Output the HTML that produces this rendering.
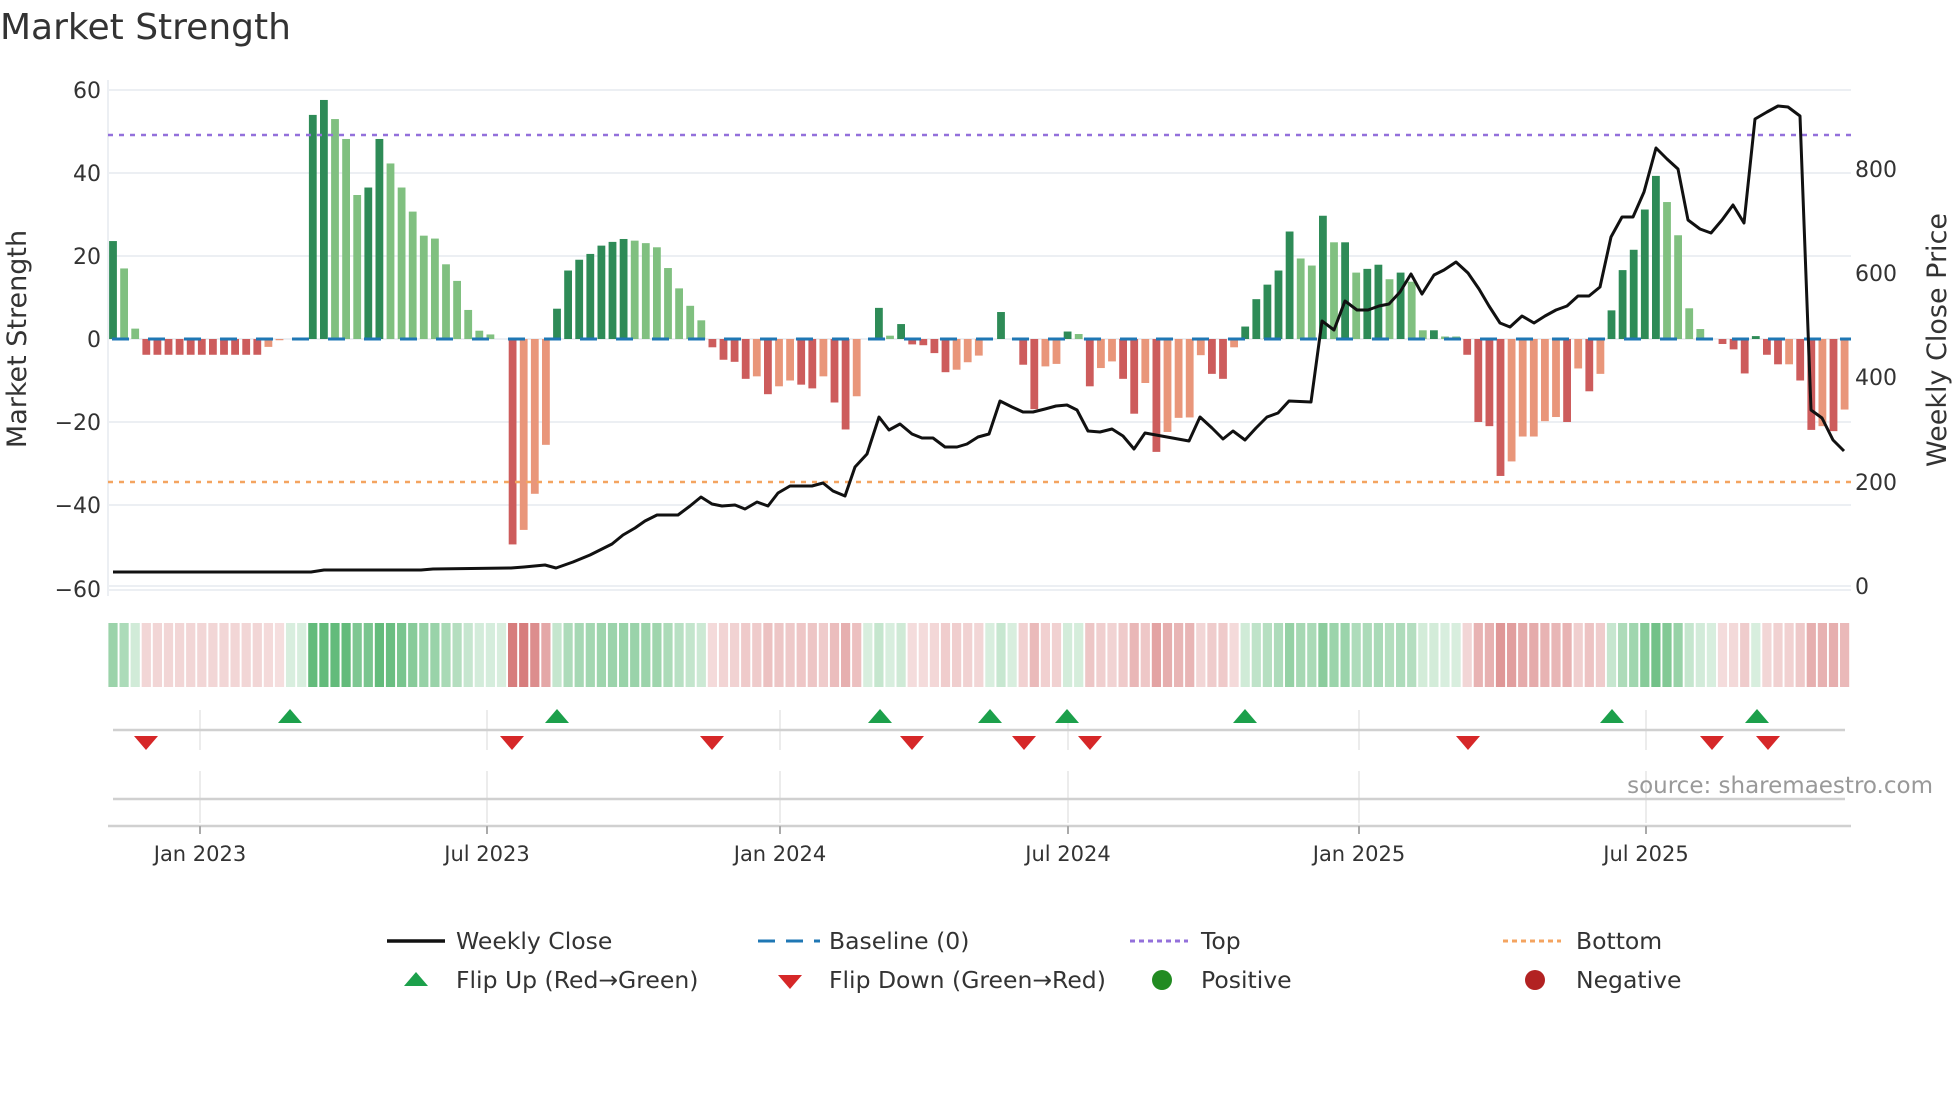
<!DOCTYPE html>
<html><head><meta charset="utf-8">
<style>
html,body{margin:0;padding:0;background:#fff;width:1960px;height:1102px;overflow:hidden}
svg{display:block}
text{font-family:"DejaVu Sans","Liberation Sans",sans-serif;fill:#333}
</style></head>
<body>
<svg id="s" width="1960" height="1102" viewBox="0 0 1960 1102" xmlns="http://www.w3.org/2000/svg">
<text x="0" y="39" font-size="36" fill="#333">Market Strength</text>
<g stroke="#eceff3" stroke-width="2">
<line x1="108" y1="90" x2="1851" y2="90"/>
<line x1="108" y1="173" x2="1851" y2="173"/>
<line x1="108" y1="256" x2="1851" y2="256"/>
<line x1="108" y1="339" x2="1851" y2="339"/>
<line x1="108" y1="422" x2="1851" y2="422"/>
<line x1="108" y1="505" x2="1851" y2="505"/>
<line x1="108" y1="586" x2="1851" y2="586"/>
<line x1="108" y1="590" x2="1851" y2="590"/>
<line x1="108" y1="80" x2="108" y2="596"/>
</g>
<g font-size="22" text-anchor="end">
<text x="101" y="98">60</text>
<text x="101" y="181">40</text>
<text x="101" y="264">20</text>
<text x="101" y="347">0</text>
<text x="101" y="430">−20</text>
<text x="101" y="513">−40</text>
<text x="101" y="597">−60</text>
</g>
<g font-size="22">
<text x="1855" y="177">800</text>
<text x="1855" y="281">600</text>
<text x="1855" y="385">400</text>
<text x="1855" y="490">200</text>
<text x="1855" y="594">0</text>
</g>
<text font-size="27" text-anchor="middle" transform="translate(26,339) rotate(-90)">Market Strength</text>
<text font-size="27" text-anchor="middle" transform="translate(1946,340) rotate(-90)">Weekly Close Price</text>
<g id="bars"></g>
<line x1="108" y1="339" x2="1851" y2="339" stroke="#1f77b4" stroke-width="3" stroke-dasharray="17 19" stroke-dashoffset="-4"/>
<line x1="108" y1="135" x2="1851" y2="135" stroke="#9370db" stroke-width="2.5" stroke-dasharray="5 6"/>
<line x1="108" y1="482" x2="1851" y2="482" stroke="#f4a460" stroke-width="2.5" stroke-dasharray="5 6"/>
<polyline fill="none" stroke="#111" stroke-width="3" stroke-linejoin="round" points="113,572 311,572 324,570 421,570 433,569 511,568 524,567 545,565 556,568 573,562 590,555 612,544 623,535 635,528 645,521 657,515 678,515 690,506 701,497 712,504 722,506 735,505 745,509 757,502 768,506 778,493 790,486 812,486 823,483 833,491 845,496 855,467 867,454 879,417 889,430 900,424 912,434 922,438 933,438 945,447 957,447 967,444 978,437 989,434 1000,401 1012,407 1023,412 1033,412 1045,409 1056,406 1067,405 1077,410 1088,431 1100,432 1112,429 1123,436 1134,449 1145,433 1189,441 1200,417 1212,428 1223,439 1233,431 1245,440 1256,428 1267,417 1278,413 1289,401 1311,402 1322,321 1334,330 1345,301 1357,310 1368,310 1379,306 1389,304 1400,292 1411,274 1422,294 1434,275 1444,270 1456,262 1468,273 1479,289 1489,306 1500,323 1510,327 1522,316 1534,323 1545,316 1556,310 1567,306 1578,296 1589,296 1600,287 1611,237 1622,217 1633,217 1644,192 1656,148 1667,159 1678,169 1688,220 1700,229 1711,233 1722,220 1733,205 1744,223 1755,119 1767,112 1778,106 1788,107 1800,116 1811,410 1822,418 1833,440 1844,451"/>
<g id="heat"></g>
<g stroke="#e6e6e6" stroke-width="1.5">
<line x1="200" y1="710" x2="200" y2="750"/><line x1="487" y1="710" x2="487" y2="750"/><line x1="780" y1="710" x2="780" y2="750"/><line x1="1068" y1="710" x2="1068" y2="750"/><line x1="1359" y1="710" x2="1359" y2="750"/><line x1="1646" y1="710" x2="1646" y2="750"/>
<line x1="200" y1="771" x2="200" y2="823"/><line x1="487" y1="771" x2="487" y2="823"/><line x1="780" y1="771" x2="780" y2="823"/><line x1="1068" y1="771" x2="1068" y2="823"/><line x1="1359" y1="771" x2="1359" y2="823"/><line x1="1646" y1="771" x2="1646" y2="823"/>
</g>
<line x1="113" y1="730" x2="1845" y2="730" stroke="#d0d0d0" stroke-width="2.5"/>
<line x1="113" y1="799" x2="1845" y2="799" stroke="#d0d0d0" stroke-width="2.5"/>
<line x1="108" y1="826" x2="1851" y2="826" stroke="#d0d0d0" stroke-width="2.5"/>
<g id="mk"></g>
<g stroke="#aaa" stroke-width="2">
<line x1="200" y1="826" x2="200" y2="834"/><line x1="487" y1="826" x2="487" y2="834"/><line x1="780" y1="826" x2="780" y2="834"/><line x1="1068" y1="826" x2="1068" y2="834"/><line x1="1359" y1="826" x2="1359" y2="834"/><line x1="1646" y1="826" x2="1646" y2="834"/>
</g>
<g font-size="21" text-anchor="middle">
<text x="200" y="861">Jan 2023</text>
<text x="487" y="861">Jul 2023</text>
<text x="780" y="861">Jan 2024</text>
<text x="1068" y="861">Jul 2024</text>
<text x="1359" y="861">Jan 2025</text>
<text x="1646" y="861">Jul 2025</text>
</g>
<text x="1933" y="793" font-size="23" text-anchor="end" style="fill:#999">source: sharemaestro.com</text>
<g font-size="23.5">
<line x1="387" y1="941" x2="445" y2="941" stroke="#111" stroke-width="3.5"/>
<text x="456" y="949">Weekly Close</text>
<line x1="758" y1="941" x2="820" y2="941" stroke="#1f77b4" stroke-width="3" stroke-dasharray="17 11"/>
<text x="829" y="949">Baseline (0)</text>
<line x1="1130" y1="941" x2="1188" y2="941" stroke="#9370db" stroke-width="3" stroke-dasharray="5 4"/>
<text x="1201" y="949">Top</text>
<line x1="1503" y1="941" x2="1561" y2="941" stroke="#f4a460" stroke-width="3" stroke-dasharray="5 4"/>
<text x="1576" y="949">Bottom</text>
<path d="M416 972 L428 986 L404 986 Z" fill="#1ca04b"/>
<text x="456" y="988">Flip Up (Red→Green)</text>
<path d="M778 975 L802 975 L790 989 Z" fill="#d62728"/>
<text x="829" y="988">Flip Down (Green→Red)</text>
<circle cx="1162" cy="980" r="10" fill="#228b22"/>
<text x="1201" y="988">Positive</text>
<circle cx="1535" cy="980" r="10" fill="#b22222"/>
<text x="1576" y="988">Negative</text>
</g>
</svg>
<script>
var v=[23.6,17,2.5,-3.8,-3.8,-3.8,-3.8,-3.8,-3.8,-3.8,-3.8,-3.8,-3.8,-3.8,-1.9,-0.3,0,0,54,57.6,53,48.2,34.7,36.5,48.2,42.3,36.5,30.7,24.9,24.2,18,14,7,2,1.1,0,-49.5,-46,-37.3,-25.5,7.3,16.5,19.1,20.5,22.5,23.4,24.1,23.7,23.1,22.1,17.1,12.2,8,4.5,-2,-5,-5.5,-9.6,-9,-13.3,-11.4,-10,-11,-11.9,-9,-15.3,-21.8,-13.8,0,7.5,0.8,3.6,-1.3,-1.5,-3.4,-8,-7.4,-5.6,-4,0,6.5,0,-6.2,-16.9,-6.6,-6,1.8,1.2,-11.4,-7,-5.4,-9.6,-18,-10.6,-27.2,-22.4,-19,-18.9,-3.9,-8.4,-9.6,-2,3,9.6,13.1,16.5,25.9,19.4,17.7,29.7,23.3,23.3,16,16.9,17.9,14.4,16,13.8,2.1,2.1,0.6,0.6,-3.8,-20,-21,-33,-29.5,-23.5,-23.5,-19.8,-18.8,-20,-7.1,-12.6,-8.4,6.9,16.6,21.5,31.2,39.3,33,25,7.4,2.4,0,-1.2,-2.5,-8.3,0.7,-3.8,-6.1,-6.1,-10,-21.9,-21,-22.2,-17];
var f="DLLDDDDDDDDDDDLL--DDLLLDDLLLLLLLLLL-DLLLDDDDDDDLLLLLLLDDDDLDLLDDLDDL-DLDDDDDLLL-D-DDLLDLDLLDDLDLLLLDDLDDDDDLLDLDLDDLDLLDLLDDDDLLLLLDLDLDDDDDLLLL-DDDDDDLDDLDL";
var ns="http://www.w3.org/2000/svg",B=document.getElementById("bars"),H=document.getElementById("heat"),M=document.getElementById("mk");
function r(g,x,y,w,h,c){var e=document.createElementNS(ns,"rect");e.setAttribute("x",x);e.setAttribute("y",y);e.setAttribute("width",w);e.setAttribute("height",h);e.setAttribute("fill",c);g.appendChild(e);}
var k=83/20;
for(var i=0;i<v.length;i++){var cx=113+11.1*i,val=v[i],d=f[i]=="D";
 if(val!=0){var h=Math.abs(val)*k,y=val>0?339-h:339;
 var c=val>0?(d?"#2e8b57":"#80c080"):(d?"#cd5c5c":"#e9967a");r(B,cx-3.9,y,7.8,h,c);}
 var t=Math.min(1,Math.abs(val)/45),a=0.2+0.6*t,base=val>=0?[60,170,90]:[205,92,92];
 if(val>=0&&val<1)a=0.2;
 var col="rgb("+base.map(function(b){return Math.round(b*a+255*(1-a))}).join(",")+")";
 r(H,cx-4.6,623,9.2,64,col);}
var up=[290,557,880,990,1067,1245,1612,1757],dn=[146,512,712,912,1024,1090,1468,1712,1768];
up.forEach(function(x){var p=document.createElementNS(ns,"path");p.setAttribute("d","M"+x+" 709 L"+(x+12)+" 723 L"+(x-12)+" 723 Z");p.setAttribute("fill","#1ca04b");M.appendChild(p);});
dn.forEach(function(x){var p=document.createElementNS(ns,"path");p.setAttribute("d","M"+(x-12)+" 736 L"+(x+12)+" 736 L"+x+" 750 Z");p.setAttribute("fill","#d62728");M.appendChild(p);});
</script>
</body></html>
